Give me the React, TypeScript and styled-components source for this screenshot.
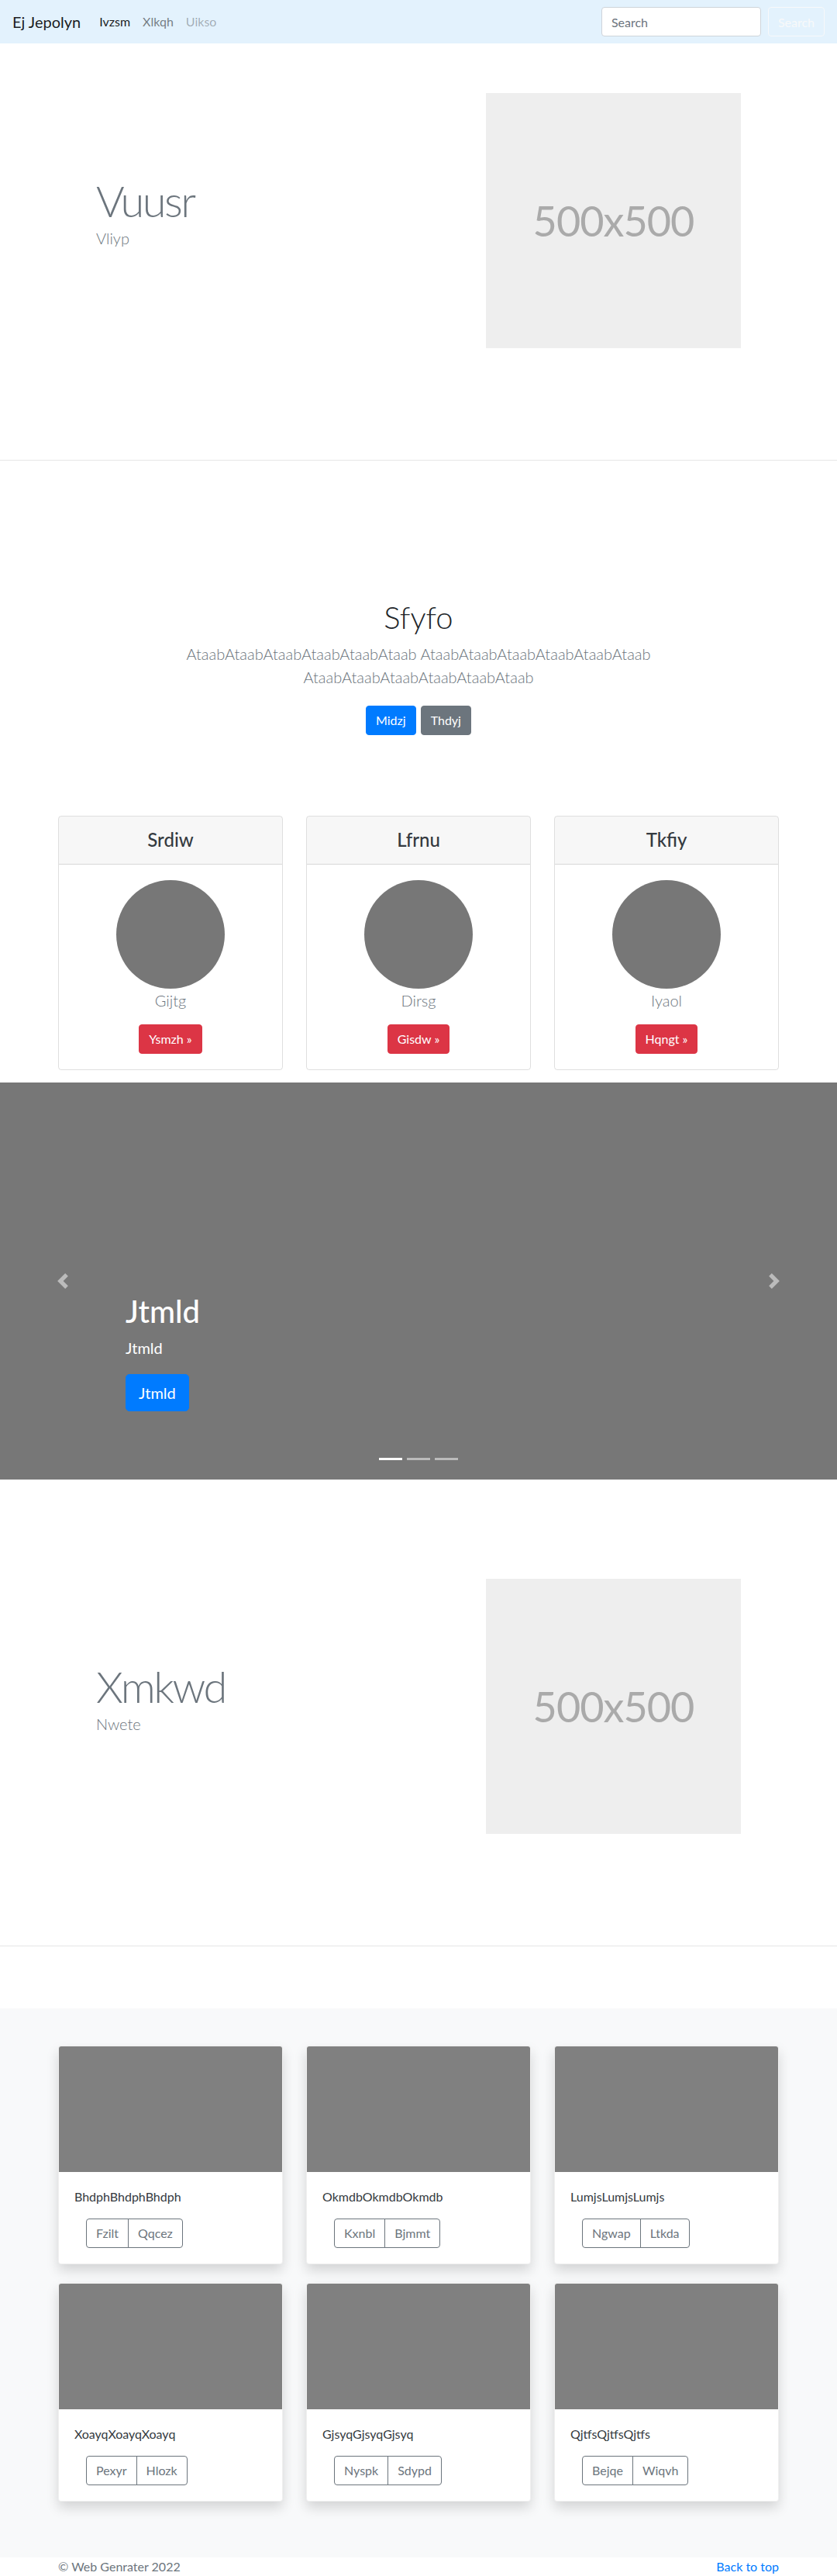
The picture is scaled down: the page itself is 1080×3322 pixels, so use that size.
import React from "react";
import styled, { createGlobalStyle } from "styled-components";

const GlobalStyle = createGlobalStyle`
  *, *::before, *::after { box-sizing: border-box; }
  html, body { margin: 0; padding: 0; }
  body {
    font-family: Lato, "Open Sans", "Liberation Sans", sans-serif;
    font-size: 16px;
    line-height: 1.5;
    color: #212529;
    background: #fff;
  }
`;

const Navbar = styled.nav`
  height: 56px;
  padding: 8px 16px;
  display: flex;
  align-items: center;
  background: #e3f2fd;
`;

const Brand = styled.a`
  font-size: 20px;
  line-height: 30px;
  color: rgba(0, 0, 0, 0.9);
  margin-right: 16px;
  text-decoration: none;
`;

const NavList = styled.div`
  display: flex;
`;

const NavLink = styled.a<{ $state: "active" | "normal" | "disabled" }>`
  padding: 8px;
  text-decoration: none;
  color: ${(p) =>
    p.$state === "active" ? "rgba(0,0,0,0.9)" : p.$state === "normal" ? "rgba(0,0,0,0.5)" : "rgba(0,0,0,0.3)"};
`;

const SearchForm = styled.form`
  margin-left: auto;
  display: flex;
  gap: 9px;
`;

const SearchInput = styled.input`
  width: 206px;
  height: 38px;
  padding: 6px 12px;
  font-family: inherit;
  font-size: 16px;
  color: #495057;
  background: #fff;
  border: 1px solid #ced4da;
  border-radius: 4px;
  &::placeholder { color: #6c757d; }
`;

const OutlineLightButton = styled.button`
  height: 38px;
  padding: 6px 12px;
  font-family: inherit;
  font-size: 16px;
  color: #f8f9fa;
  background: transparent;
  border: 1px solid #f8f9fa;
  border-radius: 4px;
`;

const FeatureSection = styled.section<{ $top: number }>`
  padding: ${(p) => p.$top}px 0 144px;
`;

const Container = styled.div`
  width: 930px;
  margin: 0 auto;
`;

const FeatureGrid = styled(Container)`
  display: grid;
  grid-template-columns: 465px 465px;
  align-items: start;
`;

const FeatureText = styled.div`
  padding: 105px 0 0 49px;
`;

const DisplayTitle = styled.h1`
  margin: 0;
  font-size: 56px;
  font-weight: 300;
  line-height: 1.2;
  letter-spacing: -2.5px;
  color: #6c757d;
`;

const FeatureLead = styled.p`
  margin: 0;
  font-size: 20px;
  font-weight: 300;
  line-height: 30px;
  color: #6c757d;
`;

const Placeholder = styled.div`
  margin-left: 87px;
  width: 329px;
  height: 329px;
  background: #eeeeee;
  color: #aaaaaa;
  display: flex;
  align-items: center;
  justify-content: center;
  font-size: 54px;
  font-weight: 400;
  letter-spacing: -1px;
`;

const Divider = styled.hr`
  margin: 0;
  border: 0;
  height: 1px;
  background: #e6e6e6;
`;

const IntroSection = styled.section`
  padding-top: 178px;
  text-align: center;
`;

const IntroTitle = styled.h1`
  margin: 0 0 8px;
  font-size: 40px;
  font-weight: 300;
  line-height: 1.2;
  color: #212529;
`;

const IntroLead = styled.p`
  max-width: 700px;
  margin: 0 auto 22px;
  font-size: 20px;
  font-weight: 300;
  line-height: 30px;
  color: #6c757d;
`;

const ButtonRow = styled.div`
  display: flex;
  justify-content: center;
  gap: 6px;
`;

const SolidButton = styled.a<{ $color: string; $large?: boolean }>`
  display: inline-block;
  padding: ${(p) => (p.$large ? "8px 16px" : "6px 12px")};
  font-size: ${(p) => (p.$large ? "20px" : "16px")};
  line-height: ${(p) => (p.$large ? "30px" : "24px")};
  color: #fff;
  background: ${(p) => p.$color};
  border: 1px solid ${(p) => p.$color};
  border-radius: ${(p) => (p.$large ? "5px" : "4px")};
  text-decoration: none;
  cursor: pointer;
`;

const PricingDeck = styled(Container)`
  display: grid;
  grid-template-columns: repeat(3, 290px);
  gap: 30px;
  margin-top: 104px;
  margin-bottom: 16px;
`;

const PricingCard = styled.div`
  border: 1px solid rgba(0, 0, 0, 0.125);
  border-radius: 4px;
  text-align: center;
  overflow: hidden;
`;

const PricingHeader = styled.div`
  padding: 16px 20px;
  background: rgba(0, 0, 0, 0.03);
  border-bottom: 1px solid rgba(0, 0, 0, 0.125);
`;

const PricingTitle = styled.h4`
  margin: 0;
  font-size: 24px;
  font-weight: 500;
  line-height: 1.2;
  color: #343a40;
`;

const PricingBody = styled.div`
  padding: 20px;
  display: flex;
  flex-direction: column;
  align-items: center;
`;

const Avatar = styled.div`
  width: 140px;
  height: 140px;
  border-radius: 50%;
  background: #777777;
`;

const PricingName = styled.p`
  margin: 0 0 16px;
  font-size: 20px;
  font-weight: 300;
  line-height: 30px;
  color: #6c757d;
`;

const Carousel = styled.div`
  position: relative;
  height: 512px;
  background: #777777;
  overflow: hidden;
`;

const CarouselControl = styled.a<{ $side: "left" | "right" }>`
  position: absolute;
  top: 0;
  bottom: 0;
  ${(p) => p.$side}: 0;
  width: 15%;
  display: flex;
  align-items: center;
  justify-content: center;
  opacity: 0.5;
`;

const Caption = styled.div`
  position: absolute;
  left: 15%;
  right: 15%;
  bottom: 88px;
  color: #fff;
  text-align: left;
  display: flex;
  flex-direction: column;
  align-items: flex-start;
`;

const CaptionTitle = styled.h1`
  margin: 0 0 8px;
  font-size: 40px;
  font-weight: 500;
  line-height: 1.2;
`;

const CaptionText = styled.p`
  margin: 0 0 19px;
  font-size: 20px;
  line-height: 30px;
`;

const Indicators = styled.ol`
  position: absolute;
  left: 0;
  right: 0;
  bottom: 25px;
  margin: 0;
  padding: 0;
  list-style: none;
  display: flex;
  justify-content: center;
  gap: 6px;
`;

const Indicator = styled.li<{ $active?: boolean }>`
  width: 30px;
  height: 3px;
  background: #fff;
  opacity: ${(p) => (p.$active ? 1 : 0.5)};
`;

const AlbumSection = styled.section`
  margin-top: 80px;
  padding: 48px 0 72px;
  background: #f8f9fa;
`;

const AlbumGrid = styled(Container)`
  display: grid;
  grid-template-columns: repeat(3, 290px);
  column-gap: 30px;
  row-gap: 24px;
`;

const AlbumCard = styled.div`
  background: #fff;
  border: 1px solid rgba(0, 0, 0, 0.06);
  border-radius: 4px;
  overflow: hidden;
  box-shadow: 0 8px 16px rgba(0, 0, 0, 0.15);
`;

const AlbumImage = styled.div`
  height: 162px;
  background: #808080;
`;

const AlbumBody = styled.div`
  padding: 20px;
`;

const AlbumText = styled.p`
  margin: 0 0 16px;
  font-size: 16px;
  line-height: 24px;
  color: #343a40;
`;

const ButtonGroup = styled.div`
  display: inline-flex;
  margin-left: 15px;
`;

const GroupButton = styled.button`
  height: 38px;
  padding: 6px 12px;
  font-family: inherit;
  font-size: 16px;
  line-height: 24px;
  color: #6c757d;
  background: transparent;
  border: 1px solid #6c757d;
  border-radius: 0;
  &:first-child { border-radius: 4px 0 0 4px; }
  &:last-child { border-radius: 0 4px 4px 0; margin-left: -1px; }
`;

const Footer = styled.footer`
  height: 24px;
`;

const FooterInner = styled(Container)`
  display: flex;
  justify-content: space-between;
  line-height: 24px;
`;

const FooterText = styled.span`
  color: #6c757d;
`;

const FooterLink = styled.a`
  color: #007bff;
  text-decoration: none;
`;

const Chevron = ({ dir }: { dir: "prev" | "next" }) => (
  <svg width="20" height="20" viewBox="0 0 8 8" fill="#fff">
    {dir === "prev" ? (
      <path d="M5.25 0l-4 4 4 4 1.5-1.5L4.25 4l2.5-2.5L5.25 0z" />
    ) : (
      <path d="M2.75 0l-1.5 1.5L3.75 4l-2.5 2.5L2.75 8l4-4-4-4z" />
    )}
  </svg>
);

const Feature = ({ title, lead, top }: { title: string; lead: string; top: number }) => (
  <FeatureSection $top={top}>
    <FeatureGrid>
      <FeatureText>
        <DisplayTitle>{title}</DisplayTitle>
        <FeatureLead>{lead}</FeatureLead>
      </FeatureText>
      <Placeholder>500x500</Placeholder>
    </FeatureGrid>
  </FeatureSection>
);

const pricing = [
  { title: "Srdiw", name: "Gijtg", btn: "Ysmzh »" },
  { title: "Lfrnu", name: "Dirsg", btn: "Gisdw »" },
  { title: "Tkfiy", name: "Iyaol", btn: "Hqngt »" },
];

const album = [
  { text: "BhdphBhdphBhdph", a: "Fzilt", b: "Qqcez" },
  { text: "OkmdbOkmdbOkmdb", a: "Kxnbl", b: "Bjmmt" },
  { text: "LumjsLumjsLumjs", a: "Ngwap", b: "Ltkda" },
  { text: "XoayqXoayqXoayq", a: "Pexyr", b: "Hlozk" },
  { text: "GjsyqGjsyqGjsyq", a: "Nyspk", b: "Sdypd" },
  { text: "QjtfsQjtfsQjtfs", a: "Bejqe", b: "Wiqvh" },
];

export default function App() {
  return (
    <>
      <GlobalStyle />
      <Navbar>
        <Brand href="#">Ej Jepolyn</Brand>
        <NavList>
          <NavLink $state="active" href="#">Ivzsm</NavLink>
          <NavLink $state="normal" href="#">Xlkqh</NavLink>
          <NavLink $state="disabled" href="#">Uikso</NavLink>
        </NavList>
        <SearchForm onSubmit={(e) => e.preventDefault()}>
          <SearchInput type="search" placeholder="Search" />
          <OutlineLightButton type="submit">Search</OutlineLightButton>
        </SearchForm>
      </Navbar>

      <Feature title="Vuusr" lead="Vliyp" top={64} />
      <Divider />

      <IntroSection>
        <Container>
          <IntroTitle>Sfyfo</IntroTitle>
          <IntroLead>
            AtaabAtaabAtaabAtaabAtaabAtaab AtaabAtaabAtaabAtaabAtaabAtaab AtaabAtaabAtaabAtaabAtaabAtaab
          </IntroLead>
          <ButtonRow>
            <SolidButton $color="#007bff">Midzj</SolidButton>
            <SolidButton $color="#6c757d">Thdyj</SolidButton>
          </ButtonRow>
        </Container>
      </IntroSection>

      <PricingDeck>
        {pricing.map((p) => (
          <PricingCard key={p.title}>
            <PricingHeader>
              <PricingTitle>{p.title}</PricingTitle>
            </PricingHeader>
            <PricingBody>
              <Avatar />
              <PricingName>{p.name}</PricingName>
              <SolidButton $color="#dc3545">{p.btn}</SolidButton>
            </PricingBody>
          </PricingCard>
        ))}
      </PricingDeck>

      <Carousel>
        <Caption>
          <CaptionTitle>Jtmld</CaptionTitle>
          <CaptionText>Jtmld</CaptionText>
          <SolidButton $color="#007bff" $large>Jtmld</SolidButton>
        </Caption>
        <CarouselControl $side="left" href="#">
          <Chevron dir="prev" />
        </CarouselControl>
        <CarouselControl $side="right" href="#">
          <Chevron dir="next" />
        </CarouselControl>
        <Indicators>
          <Indicator $active />
          <Indicator />
          <Indicator />
        </Indicators>
      </Carousel>

      <Feature title="Xmkwd" lead="Nwete" top={128} />
      <Divider />

      <AlbumSection>
        <AlbumGrid>
          {album.map((c) => (
            <AlbumCard key={c.text}>
              <AlbumImage />
              <AlbumBody>
                <AlbumText>{c.text}</AlbumText>
                <ButtonGroup>
                  <GroupButton>{c.a}</GroupButton>
                  <GroupButton>{c.b}</GroupButton>
                </ButtonGroup>
              </AlbumBody>
            </AlbumCard>
          ))}
        </AlbumGrid>
      </AlbumSection>

      <Footer>
        <FooterInner>
          <FooterText>© Web Genrater 2022</FooterText>
          <FooterLink href="#">Back to top</FooterLink>
        </FooterInner>
      </Footer>
    </>
  );
}
